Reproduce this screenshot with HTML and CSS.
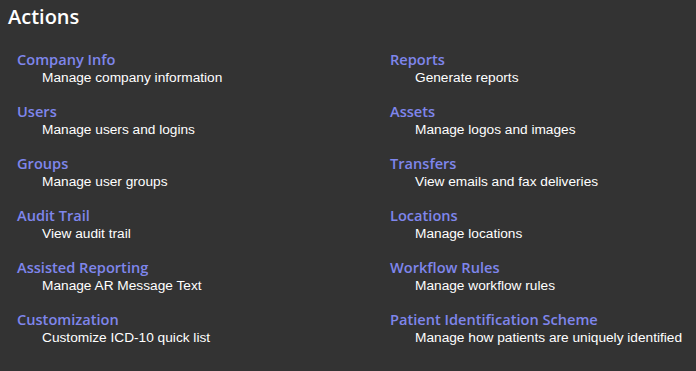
FILE: index.html
```html
<!DOCTYPE html>
<html>
<head>
<meta charset="utf-8">
<link rel="stylesheet" href="styles.css">
</head>
<body>
<h1 class="title">Actions</h1>
<div class="grid">
  <div class="item"><a class="name">Company Info</a><div class="desc">Manage company information</div></div>
  <div class="item"><a class="name">Reports</a><div class="desc">Generate reports</div></div>
  <div class="item"><a class="name">Users</a><div class="desc">Manage users and logins</div></div>
  <div class="item"><a class="name">Assets</a><div class="desc">Manage logos and images</div></div>
  <div class="item"><a class="name">Groups</a><div class="desc">Manage user groups</div></div>
  <div class="item"><a class="name">Transfers</a><div class="desc">View emails and fax deliveries</div></div>
  <div class="item"><a class="name">Audit Trail</a><div class="desc">View audit trail</div></div>
  <div class="item"><a class="name">Locations</a><div class="desc">Manage locations</div></div>
  <div class="item"><a class="name">Assisted Reporting</a><div class="desc">Manage AR Message Text</div></div>
  <div class="item"><a class="name">Workflow Rules</a><div class="desc">Manage workflow rules</div></div>
  <div class="item"><a class="name">Customization</a><div class="desc">Customize ICD-10 quick list</div></div>
  <div class="item"><a class="name">Patient Identification Scheme</a><div class="desc">Manage how patients are uniquely identified</div></div>
</div>
</body>
</html>
```
FILE: styles.css
```css
html, body {
  background: #333333;
}
body {
  margin: 0;
  padding: 4px 8px 0 8px;
}
.title {
  margin: 0;
  font-family: "Open Sans", "Noto Sans", sans-serif;
  font-weight: 600;
  font-size: 20px;
  line-height: 26px;
  color: #ffffff;
}
.grid {
  display: grid;
  grid-template-columns: 373px 1fr;
  grid-auto-rows: 52px;
  padding: 20px 0 0 9px;
}
.item {
  display: flex;
  flex-direction: column;
}
.name {
  font-family: "Open Sans", "Noto Sans", sans-serif;
  font-weight: 600;
  font-size: 14.6px;
  line-height: 18px;
  color: #7f86ec;
}
.desc {
  font-family: "Liberation Sans", Arial, sans-serif;
  font-size: 13.7px;
  line-height: 17px;
  color: #ffffff;
  padding-left: 25px;
  margin-top: 1px;
}
```
